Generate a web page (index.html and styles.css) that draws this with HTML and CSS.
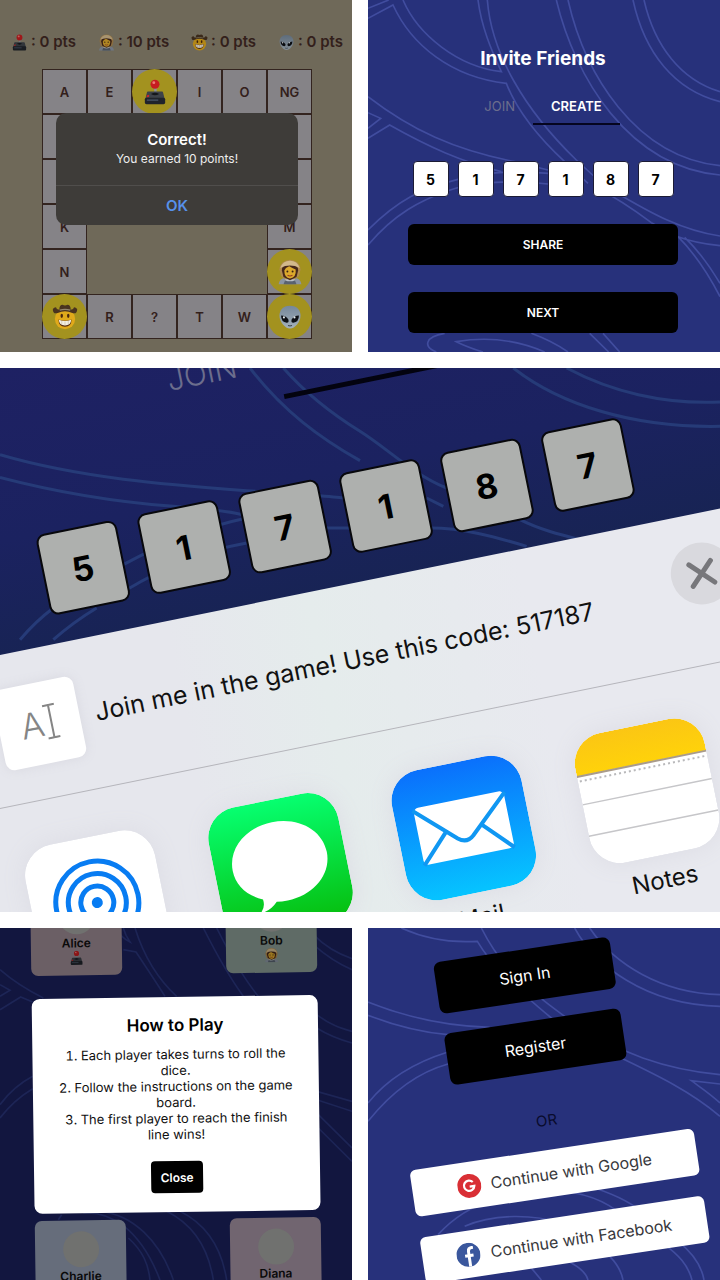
FILE: index.html
```html
<!DOCTYPE html>
<html lang="en">
<head>
<meta charset="utf-8">
<meta name="viewport" content="width=device-width, initial-scale=1">
<title>Word Board Game</title>
<link rel="stylesheet" href="styles.css">
</head>
<body>
<svg class="defs" aria-hidden="true">
  <defs>
    <linearGradient id="g-msg" x1="0" y1="0" x2="0" y2="1"><stop offset="0" stop-color="#06ff70"/><stop offset="1" stop-color="#06bd0c"/></linearGradient>
    <linearGradient id="g-mail" x1="0" y1="0" x2="0" y2="1"><stop offset="0" stop-color="#0a70fc"/><stop offset="1" stop-color="#06c4ff"/></linearGradient>
    <linearGradient id="g-note" x1="0" y1="0" x2="0" y2="1"><stop offset="0" stop-color="#fbc614"/><stop offset="1" stop-color="#ffd20a"/></linearGradient>
    <linearGradient id="g-alien" x1="0" y1="0" x2="0" y2="1"><stop offset="0" stop-color="#75879a"/><stop offset="1" stop-color="#a3b1bb"/></linearGradient>
    <clipPath id="note-clip"><rect width="132" height="132" rx="31"/></clipPath>
  </defs>
  <symbol id="joystick" viewBox="0 0 32 32">
    <path d="M15 10h3v11h-3z" fill="#8d9298"/>
    <circle cx="16" cy="6.500" r="5.500" fill="#c61d20"/><circle cx="14.500" cy="4.500" r="1.800" fill="#ef7b74"/>
    <path d="M6 17q0-1.500 1.500-1.500h17q1.500 0 1.500 1.500l2 8H4z" fill="#3d4249"/>
    <path d="M11 18.500q5-3 10 0-5 3-10 0z" fill="#14171b"/>
    <rect x="3.500" y="23" width="25" height="8" rx="2" fill="#20242b"/>
    <path d="M6 26h14" stroke="#4c596c" stroke-width="1.500"/><path d="M6 20l3-.500-.500 2.500-3 .500z" fill="#c8282a"/>
  </symbol>
  <symbol id="astronaut" viewBox="0 0 32 32">
    <path d="M2 31q1-7 8-8h12q7 1 8 8z" fill="#8a94a3"/>
    <path d="M8 31l2-5h12l2 5z" fill="#59626f"/>
    <path d="M10 23h12v3q-6 3-12 0z" fill="#b9c0c8"/>
    <path d="M3 13Q4 2 16 1q12 1 13 12l-2 8-5 4H10l-5-4z" fill="#b08a4e"/>
    <path d="M6 14q0-8 10-8t10 8l-2 8-8 4-8-4z" fill="#46281b"/>
    <path d="M9 14q1-3 6-5 5 3 8 4 1 10-7 11-7-1-7-10z" fill="#dca92c"/>
    <path d="M4 11Q7 2 16 2t12 9q-12-6-24 0z" fill="#d2b98c"/>
    <circle cx="12.800" cy="15.500" r="1.200" fill="#3a2113"/><circle cx="19.200" cy="15.500" r="1.200" fill="#3a2113"/>
    <path d="M13 20q3 1.800 6 0" stroke="#9a3a20" stroke-width="1.300" fill="none"/>
  </symbol>
  <symbol id="cowboy" viewBox="0 0 32 32">
    <circle cx="16" cy="18.500" r="12.500" fill="#e0a91b"/>
    <path d="M8 19q8 3 16 0 0 9-8 9t-8-9z" fill="#5a2f10"/>
    <path d="M8.500 19.500q7.500 3 15 0 0 7-7.500 7t-7.500-7z" fill="#f3eee2"/>
    <path d="M12 21v4.500M16 21.500v5M20 21v4.500" stroke="#b8a98c" stroke-width=".6"/>
    <ellipse cx="12" cy="14.500" rx="1.500" ry="2.600" fill="#4a270f"/><ellipse cx="20" cy="14.500" rx="1.500" ry="2.600" fill="#4a270f"/>
    <path d="M1 6q4-4 5 0l3 1q0-6 4-6 3 1.500 6 0 4 0 4 6l3-1q1-4 5 0 0 7-6 5-9-4-18 0-6 2-6-5z" fill="#49331f"/>
    <path d="M9.500 7.500q6.500-2 13 0" stroke="#93866f" stroke-width="1.500" fill="none"/>
  </symbol>
  <symbol id="alien" viewBox="0 0 32 32">
    <path d="M16 2C7 2 3 8 3 14c0 8 7 16 13 16s13-8 13-16C29 8 25 2 16 2z" fill="url(#g-alien)"/>
    <path d="M5 14q6 0 9 5 1 4-2 4-7-1-7-9zM27 14q-6 0-9 5-1 4 2 4 7-1 7-9z" fill="#0d1015"/>
    <circle cx="8.500" cy="16.500" r="1.300" fill="#e6edf2"/><circle cx="21.500" cy="16.500" r="1.300" fill="#e6edf2"/>
    <path d="M13.500 26.500q2.500 1 5 0" stroke="#303a42" stroke-width="1.200" fill="none"/>
  </symbol>
</svg>

<main class="gallery">
  <section class="panel game">
    <ul class="scores">
      <li><svg class="emoji"><use href="#joystick"/></svg>: 0 pts</li>
      <li><svg class="emoji"><use href="#astronaut"/></svg>: 10 pts</li>
      <li><svg class="emoji"><use href="#cowboy"/></svg>: 0 pts</li>
      <li><svg class="emoji"><use href="#alien"/></svg>: 0 pts</li>
    </ul>
    <div class="board-wrap">
      <div class="board">
        <div class="cell">A</div><div class="cell">E</div>
        <div class="cell"><span class="token"><svg><use href="#joystick"/></svg></span></div>
        <div class="cell">I</div><div class="cell">O</div><div class="cell">NG</div>
        <div class="cell"></div><div class="middle"></div><div class="cell"></div>
        <div class="cell"></div><div class="cell"></div>
        <div class="cell">K</div><div class="cell">M</div>
        <div class="cell">N</div><div class="cell"><span class="token"><svg><use href="#astronaut"/></svg></span></div>
        <div class="cell"><span class="token"><svg><use href="#cowboy"/></svg></span></div>
        <div class="cell">R</div><div class="cell">?</div><div class="cell">T</div><div class="cell">W</div>
        <div class="cell"><span class="token"><svg><use href="#alien"/></svg></span></div>
      </div>
      <div class="alert" role="alertdialog" aria-labelledby="alert-title">
        <h2 id="alert-title">Correct!</h2>
        <p>You earned 10 points!</p>
        <button type="button">OK</button>
      </div>
    </div>
  </section>

  <section class="panel navy invite">
    <svg class="lines" viewBox="0 0 1056 1056" preserveAspectRatio="xMidYMid slice" aria-hidden="true">
      <path d="M105 0C150 105 270 200 400 215C370 150 340 80 330 0M0 25L62 0M0 55L75 15C130 135 250 232 415 250C450 340 520 420 590 485L660 550M358 0C370 160 470 330 625 480L690 540M565 0C620 230 780 500 1056 525M600 0C650 220 800 470 1056 497M795 0C830 160 920 270 1056 305M828 0C860 140 940 240 1056 275"/>
      <path d="M0 290C130 390 260 450 440 485L540 510M0 338L38 355L0 385M0 415L65 375C180 440 280 485 400 515M0 690C90 600 160 565 270 538S440 515 540 520M0 735C80 640 160 600 240 572S440 540 540 552M680 560C740 590 800 630 850 668M740 575C850 640 940 690 1056 708M930 710C970 725 1010 732 1056 737M850 668L930 710C980 760 1020 820 1056 890M950 712C990 750 1020 790 1056 850"/>
      <path d="M230 1000C170 1010 165 1040 205 1056M345 1056C310 1045 285 1035 265 1025C380 1005 470 1030 530 1056M490 1000C530 1015 570 1035 600 1056M665 1000L722 1056M705 1000L755 1056"/>
    </svg>
    <div class="invite-body">
      <h2>Invite Friends</h2>
      <div class="tabs"><button type="button">JOIN</button><button type="button" class="active">CREATE</button></div>
      <div class="code"><span>5</span><span>1</span><span>7</span><span>1</span><span>8</span><span>7</span></div>
      <button type="button" class="wide">SHARE</button>
      <button type="button" class="wide">NEXT</button>
    </div>
  </section>

  <section class="panel share">
    <svg class="lines" viewBox="0 0 2160 1632" preserveAspectRatio="xMidYMid slice" aria-hidden="true">
      <path d="M0 260C240 330 500 350 740 368S1020 385 1100 400M0 328C160 370 330 400 520 415S680 432 740 442M370 590C480 530 600 480 740 450M380 665C490 600 600 550 740 525M980 480H1080M60 815C90 780 120 750 160 720M160 815C200 780 240 750 290 720M750 0C850 130 960 210 1080 278M850 0C920 80 1000 140 1080 190S1240 320 1340 360M1280 390L1330 415M1290 480C1390 480 1480 505 1580 535M1560 455C1620 485 1680 500 1740 515M1540 0C1680 110 1900 180 2160 175M1700 0C1830 70 1990 110 2160 102"/>
    </svg>
    <div class="phone">
      <div class="phone-top">
        <div class="tabs"><button type="button">JOIN</button><button type="button" class="active" aria-label="Create"></button></div>
        <div class="code"><span>5</span><span>1</span><span>7</span><span>1</span><span>8</span><span>7</span></div>
      </div>
      <div class="sheet">
        <header>
          <span class="thumb">A<svg viewBox="0 0 14 36" aria-hidden="true"><path d="M1 1.500H13M1 34.500H13M7 1.500V34.500"/></svg></span>
          <p>Join me in the game! Use this code: 517187</p>
          <button type="button" class="dismiss" aria-label="Close"><svg viewBox="0 0 62 62"><path d="M20 20L42 42M42 20L20 42"/></svg></button>
        </header>
        <div class="apps">
          <button type="button" aria-label="AirDrop"><svg viewBox="0 0 132 132"><rect width="132" height="132" rx="31" fill="#fff"/><g fill="none" stroke="#087cf2" stroke-width="5"><circle cx="66" cy="66" r="41.500"/><circle cx="66" cy="66" r="29"/><circle cx="66" cy="66" r="16.500"/></g><circle cx="66" cy="66" r="5.500" fill="#087cf2"/></svg></button>
          <button type="button" aria-label="Messages"><svg viewBox="0 0 132 132"><rect width="132" height="132" rx="31" fill="url(#g-msg)"/><path d="M66 22c27 0 48 17.500 48 40s-21 40-48 40q-6 0-11-1-8 8-18 8 6-5 5-13C27 89 18 77 18 62c0-22.500 21-40 48-40z" fill="#fff"/></svg></button>
          <button type="button"><svg viewBox="0 0 132 132" aria-hidden="true"><rect width="132" height="132" rx="31" fill="url(#g-mail)"/><rect x="20" y="37" width="92" height="58" rx="5" fill="#fff"/><path d="M19 39L58 75Q66 82 74 75L113 39M20 95L48 66M112 95L84 66" fill="none" stroke="#1097f2" stroke-width="4"/></svg>Mail</button>
          <button type="button"><svg viewBox="0 0 132 132" aria-hidden="true"><g clip-path="url(#note-clip)"><path d="M0 0H132V132H0z" fill="#fff"/><path d="M0 0H132V38H0z" fill="url(#g-note)"/><path d="M0 38.500H132" stroke="#a99b8b" stroke-width="2"/><path d="M2 43.500H132" stroke="#b9b9bb" stroke-width="2" stroke-dasharray="2 3"/><path d="M0 67H132M0 99H132" stroke="#c6c6c9" stroke-width="1.500"/></g></svg>Notes</button>
        </div>
      </div>
    </div>
  </section>

  <section class="panel rules">
    <svg class="lines" viewBox="0 0 1056 1056" preserveAspectRatio="xMidYMid slice" aria-hidden="true">
      <path d="M345 0Q365 30 390 42Q375 20 370 0M370 65L408 72C440 120 470 165 495 205M405 0C430 80 470 150 530 205M610 0C650 80 690 150 730 205M650 0C690 80 730 150 775 205M940 50C980 85 1020 110 1056 125M940 20C980 60 1020 80 1056 92M0 125C40 160 80 185 130 210M0 170L30 187L0 205M0 245L62 207L98 222M0 530C30 490 60 465 98 445M0 570C30 530 60 505 98 482M950 300C990 325 1020 335 1056 345M950 260C990 290 1020 300 1056 310M950 490L1056 520M950 515L1056 550M955 560L1056 660M955 600L1056 700"/>
      <path d="M185 860L175 875M250 855C330 850 420 900 480 1056M300 850C400 860 480 940 520 1056M385 930C430 970 445 1010 450 1056M500 850C580 890 625 960 640 1056M540 850C620 890 665 960 680 1056"/>
    </svg>
    <div class="lobby">
      <div class="players">
        <div class="player rose"><span class="avatar"></span><b>Alice</b><svg><use href="#joystick"/></svg></div>
        <div class="player sage"><span class="avatar"></span><b>Bob</b><svg><use href="#astronaut"/></svg></div>
      </div>
      <div class="modal" role="dialog" aria-labelledby="rules-title">
        <h2 id="rules-title">How to Play</h2>
        <ol>
          <li>Each player takes turns to roll the dice.</li>
          <li>Follow the instructions on the game board.</li>
          <li>The first player to reach the finish line wins!</li>
        </ol>
        <button type="button">Close</button>
      </div>
      <div class="players">
        <div class="player steel"><span class="avatar"></span><b>Charlie</b></div>
        <div class="player mauve"><span class="avatar"></span><b>Diana</b></div>
      </div>
    </div>
  </section>

  <section class="panel navy login">
    <svg class="lines" viewBox="0 0 1056 1056" preserveAspectRatio="xMidYMid slice" aria-hidden="true">
      <path d="M100 0C170 32 250 45 328 40C370 110 430 170 550 270S900 430 1056 565M340 0C380 80 430 150 590 265S900 425 1056 440M1056 468L970 458C1000 480 1030 500 1056 525M620 0C680 110 830 230 1056 235M665 0C740 110 880 195 1056 200M0 222C120 270 250 295 365 298M0 262C100 300 180 315 240 320M0 525C60 450 150 400 240 372M0 580C80 480 160 430 240 408"/>
      <path d="M210 920C300 820 450 770 620 795C700 810 760 850 800 900M680 780C740 800 800 830 830 860M290 895C380 855 500 860 580 885M890 950C930 980 960 1010 972 1056M930 940C975 975 1000 1010 1008 1056M600 1000C630 1015 655 1035 660 1056M490 1020L520 1056M725 985C745 1005 760 1030 765 1056"/>
    </svg>
    <div class="auth">
      <button type="button" class="dark">Sign In</button>
      <button type="button" class="dark">Register</button>
      <p>OR</p>
      <button type="button" class="social"><svg viewBox="0 0 24 24" aria-hidden="true"><circle cx="12" cy="12" r="12" fill="#d92f35"/><path d="M16 8.600A5.200 5.200 0 1 0 17 12.700H12.300" fill="none" stroke="#fff" stroke-width="2.200"/></svg>Continue with Google</button>
      <button type="button" class="social"><svg viewBox="0 0 24 24" aria-hidden="true"><circle cx="12" cy="12" r="12" fill="#3a579d"/><path d="M17.500 5.300H16q-3.500 0-3.500 3.700V24M8.500 13H17" fill="none" stroke="#fff" stroke-width="3"/></svg>Continue with Facebook</button>
    </div>
  </section>
</main>
</body>
</html>
```
FILE: styles.css
```css
* { box-sizing: border-box; }

body {
  margin: 0;
  background: #fff;
  font-family: Inter, "Liberation Sans", sans-serif;
}

h2, p, ul, ol { margin: 0; padding: 0; }
button { border: 0; padding: 0; background: none; font: inherit; color: inherit; cursor: pointer; }
svg { display: block; }
.defs { position: absolute; width: 0; height: 0; }

.gallery {
  display: grid;
  grid-template-columns: 1fr 1fr;
  gap: 16px;
}

.panel {
  position: relative;
  min-width: 0;
  aspect-ratio: 1;
  overflow: hidden;
}

.lines {
  position: absolute;
  inset: 0;
  width: 100%;
  height: 100%;
  fill: none;
  stroke: #414d9f;
  stroke-width: 5;
}

.navy { background: #27317b; }

/* Board */
.game { background: #6f6959; }

.scores {
  display: flex;
  justify-content: space-between;
  padding: 32px 9px 0 11px;
  list-style: none;
  font-size: 15px;
  line-height: 20px;
  font-weight: 600;
  color: #33201b;
}

.scores li { display: flex; align-items: center; gap: 3px; }
.emoji { width: 17px; height: 19px; filter: brightness(0.8); }

.board-wrap {
  position: relative;
  display: grid;
  justify-content: center;
  padding: 17px 0 0 2px;
}

.board {
  display: grid;
  grid-template-columns: repeat(6, 45px);
  grid-auto-rows: 45px;
}

.cell {
  display: grid;
  place-items: center;
  border: 1px solid #33241f;
  background: #858387;
  color: #33201b;
  font-size: 13px;
  font-weight: 600;
}

.middle { grid-column: 2 / 6; grid-row: 2 / 6; }
.token { display: grid; place-items: center; width: 45px; height: 45px; margin: -1px; border-radius: 50%; background: #a3921f; }
.token svg { width: 26px; height: 26px; }

.alert {
  position: absolute;
  top: 61px;
  left: 50%;
  width: 242px;
  margin-left: -120px;
  border-radius: 10px;
  background: #3e3c39;
  color: #fff;
  text-align: center;
}

.alert h2 { padding-top: 17px; font-size: 15px; line-height: 20px; font-weight: 600; }
.alert p { padding-bottom: 17px; font-size: 12px; line-height: 18px; color: #eee; }
.alert button { display: block; width: 100%; height: 40px; border-top: 1px solid #504e4c; font-size: 15px; font-weight: 600; color: #5791ea; }

/* Invite */
.invite-body {
  position: relative;
  display: flex;
  flex-direction: column;
  align-items: center;
  padding: 46px 42px 0 40px;
  color: #fff;
}

.invite h2 { font-size: 19px; line-height: 26px; font-weight: 700; }
.tabs { display: flex; }
.tabs button { color: #6c6e8d; }
.tabs .active { color: #fff; font-weight: 600; }

.invite .tabs { padding-top: 24px; }
.invite .tabs button { padding: 0 18px 7px; border-bottom: 2px solid transparent; font-size: 13px; line-height: 20px; }
.tabs button.active, .invite .tabs button.active { border-bottom-color: #05051f; }

.code { display: flex; gap: 9px; }
.code span { display: grid; place-items: center; width: 36px; height: 36px; border: 1px solid #1b1b35; border-radius: 4px; background: #fff; color: #000; font-size: 14px; font-weight: 700; }
.invite .code { padding: 36px 0 27px; }
.wide { width: 100%; height: 41px; border-radius: 6px; background: #000; font-size: 12px; font-weight: 600; }
.wide + .wide { margin-top: 27px; }

/* Share sheet */
.share {
  grid-column: 1 / -1;
  aspect-ratio: 720 / 544;
  background: linear-gradient(168deg, #1e2163 0%, #1b2260 25%, #16244f 50%);
}

.share .lines { stroke: #263b78; stroke-width: 9; }

.phone {
  position: absolute;
  top: -13px;
  left: -70px;
  width: 852px;
  transform: rotate(-11.5deg);
  transform-origin: 70px 300px;
}

.phone-top {
  display: flex;
  flex-direction: column;
  align-items: center;
  height: 300px;
  padding-top: 44px;
}

.phone .tabs button { padding: 0 41px 17px; border-bottom: 5px solid transparent; font-size: 30px; line-height: 40px; font-weight: 300; }
.phone .tabs button.active { width: 204px; border-bottom-color: #03030f; }
.phone .code { gap: 21px; padding-top: 84px; }
.phone .code span { width: 82px; height: 82px; border: 2px solid #08080c; border-radius: 9px; background: #aeb0ae; font-size: 34px; }

.sheet {
  height: 420px;
  background: linear-gradient(90deg, #e6e7ed 28%, #e5ecec 45%, #e8e9ef 70%);
  color: #111;
}

.sheet header {
  display: flex;
  align-items: center;
  gap: 16px;
  height: 151px;
  padding: 0 47px 0 54px;
  border-bottom: 1px solid #b5b5bb;
}

.sheet header p { flex: 1; font-size: 25px; line-height: 32px; white-space: nowrap; }
.thumb { display: flex; align-items: center; justify-content: center; gap: 1px; width: 82px; height: 82px; border-radius: 9px; background: #fff; box-shadow: 0 0 12px #d8d8e0; color: #858585; font-size: 35px; font-weight: 300; }
.thumb svg { width: 14px; height: 36px; fill: none; stroke: #858585; stroke-width: 2; }
.dismiss { align-self: flex-start; width: 62px; height: 62px; margin-top: 29px; border-radius: 50%; background: #d9d9de; }
.dismiss svg { fill: none; stroke: #77777b; stroke-width: 5; stroke-linecap: round; }

.apps { display: flex; align-items: flex-start; gap: 55px; padding: 45px 50px 0; }
.apps button { width: 132px; font-size: 24px; line-height: 32px; }
.apps svg { width: 132px; height: 132px; margin-bottom: 9px; border-radius: 31px; box-shadow: 0 0 24px #dcdce4; }

/* Rules */
.rules { background: #12163f; }
.rules .lines { stroke: #1d2556; }
.lobby { display: grid; margin-top: -42px; padding: 0 33px; transform: rotate(-0.8deg); }
.players { display: flex; justify-content: space-between; }
.player { display: flex; flex-direction: column; align-items: center; width: 91px; height: 88px; padding-top: 11px; border-radius: 7px; color: #090909; }
.player b { padding-top: 1px; font-size: 12px; line-height: 15px; font-weight: 600; }
.player svg { width: 15px; height: 15px; filter: brightness(0.7); }
.avatar { width: 36px; height: 36px; border-radius: 50%; background: #70716f; }
.rose { background: #6b5f65; }
.sage { background: #5f6b66; }
.steel { background: #666d7b; }
.mauve { background: #716570; }

.modal {
  display: flex;
  flex-direction: column;
  align-items: center;
  margin: 23px 0 7px;
  padding: 17px 20px 19px;
  border-radius: 8px;
  background: #fff;
  color: #111;
  text-align: center;
}

.modal h2 { font-size: 17px; line-height: 22px; font-weight: 600; color: #000; }
.modal ol { padding: 10px 0 19px; list-style-position: inside; font-size: 13px; line-height: 16px; }
.modal button { width: 52px; height: 32px; border-radius: 4px; background: #000; color: #fff; font-size: 12px; font-weight: 600; }

/* Sign in */
.auth {
  position: relative;
  display: flex;
  flex-direction: column;
  align-items: center;
  height: 100%;
  padding-top: 20px;
  transform: rotate(-8.5deg);
}

.dark { flex: none; width: 178px; height: 52px; margin-bottom: 20px; border-radius: 7px; background: #000; color: #fff; font-size: 16px; }
.auth p { padding: 20px 0; font-size: 15px; line-height: 18px; color: #090b2c; }
.social { display: flex; flex: none; align-items: center; justify-content: center; gap: 10px; width: 287px; height: 47px; margin-bottom: 21px; border-radius: 6px; background: #fff; color: #37373b; font-size: 16px; }
.social svg { width: 24px; height: 24px; }
```
